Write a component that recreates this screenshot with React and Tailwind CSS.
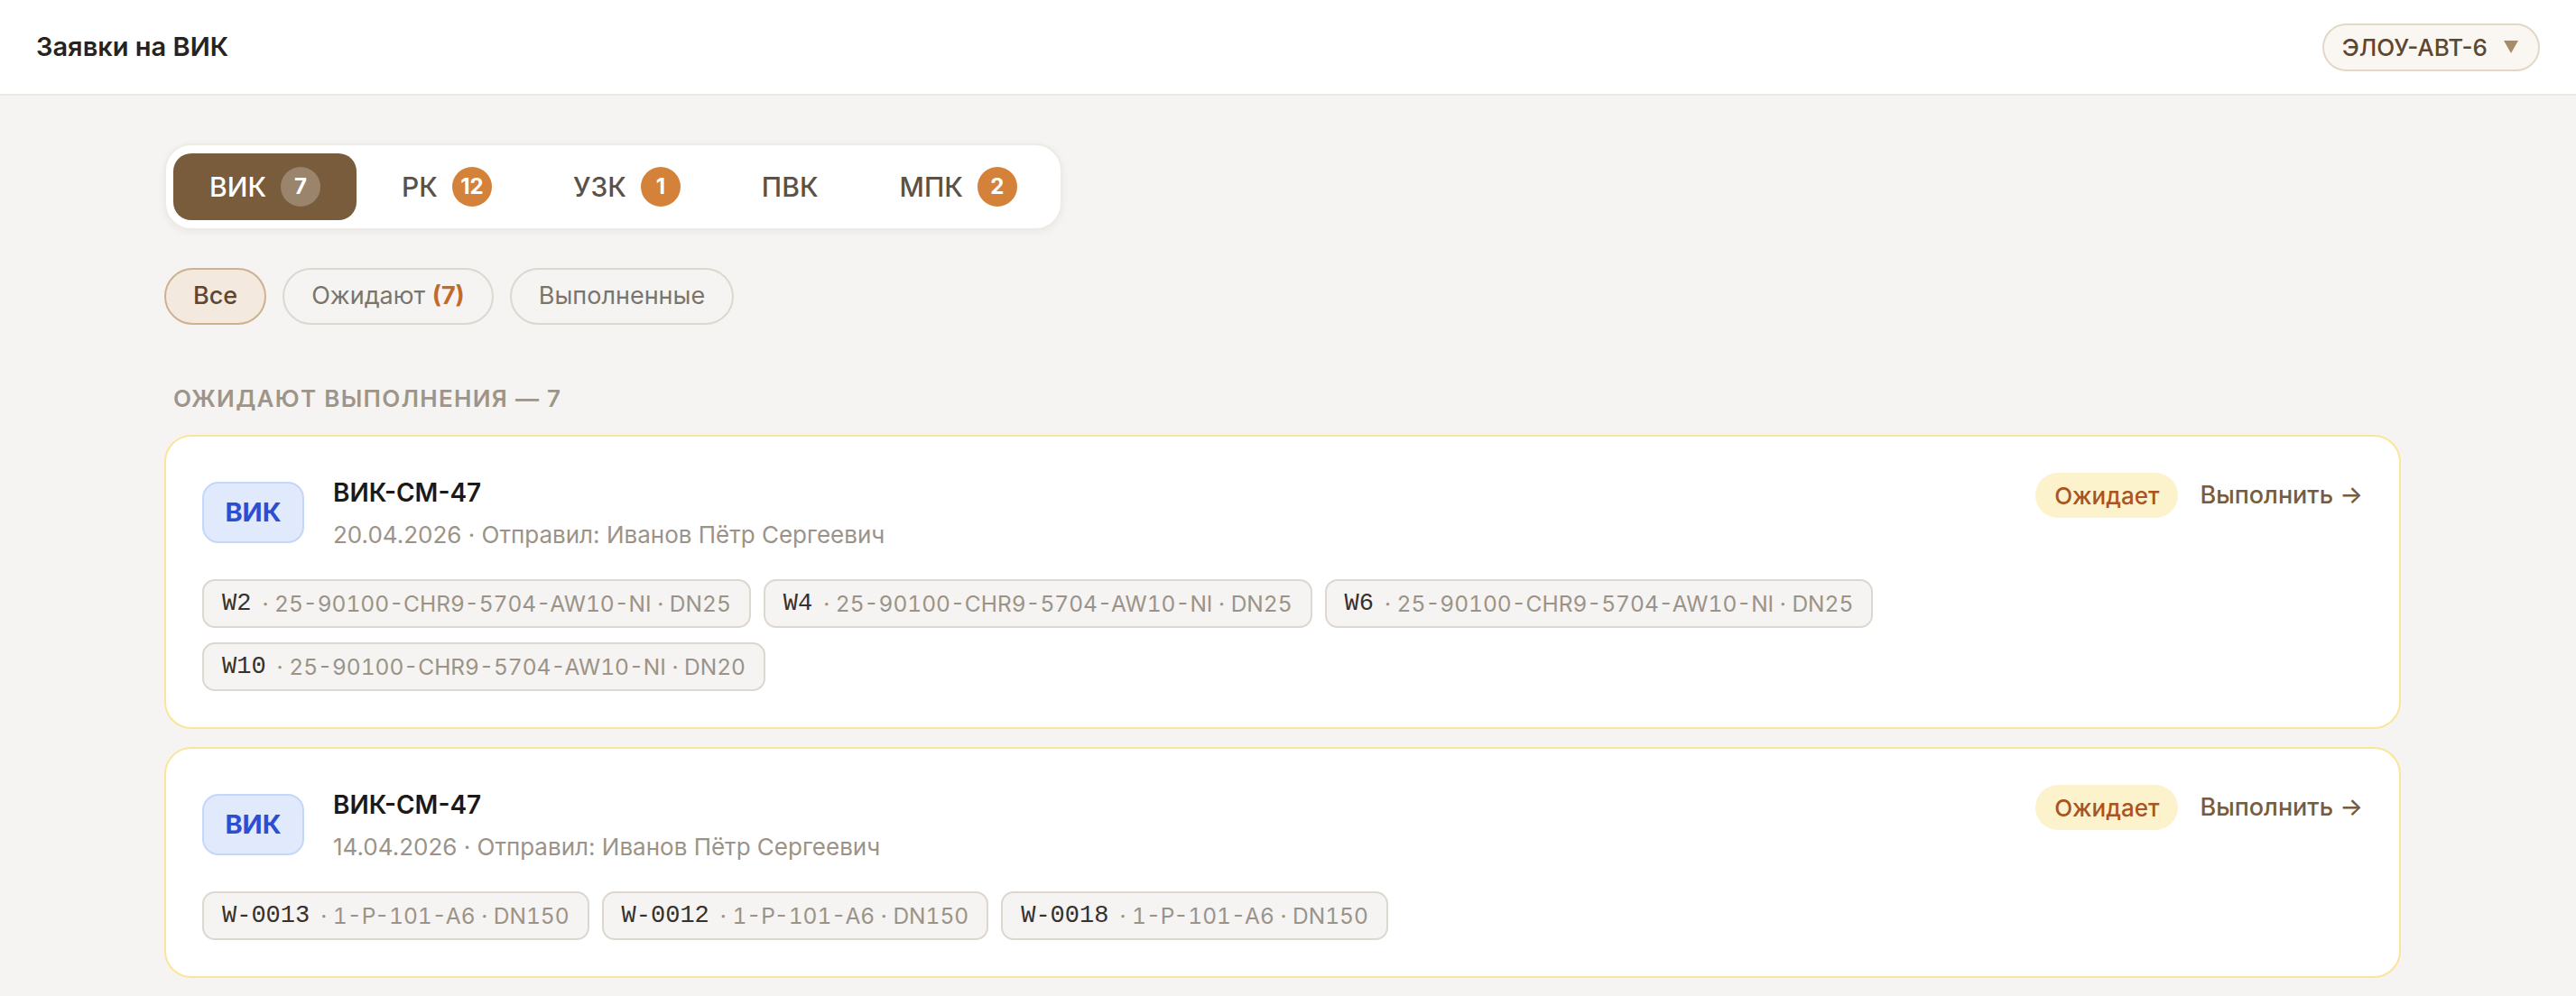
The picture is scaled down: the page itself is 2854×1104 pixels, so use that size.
import React from "react";

const tabs = [
  { name: "ВИК", count: 7, active: true },
  { name: "РК", count: 12 },
  { name: "УЗК", count: 1 },
  { name: "ПВК" },
  { name: "МПК", count: 2 },
];

const requests = [
  {
    id: 1,
    title: "ВИК-СМ-47",
    date: "20.04.2026",
    sender: "Иванов Пётр Сергеевич",
    welds: [
      { code: "W2", line: "25-90100-CHR9-5704-AW10-NI", dn: "DN25" },
      { code: "W4", line: "25-90100-CHR9-5704-AW10-NI", dn: "DN25" },
      { code: "W6", line: "25-90100-CHR9-5704-AW10-NI", dn: "DN25" },
      { code: "W10", line: "25-90100-CHR9-5704-AW10-NI", dn: "DN20" },
    ],
  },
  {
    id: 2,
    title: "ВИК-СМ-47",
    date: "14.04.2026",
    sender: "Иванов Пётр Сергеевич",
    welds: [
      { code: "W-0013", line: "1-P-101-A6", dn: "DN150" },
      { code: "W-0012", line: "1-P-101-A6", dn: "DN150" },
      { code: "W-0018", line: "1-P-101-A6", dn: "DN150" },
    ],
  },
];

const WeldChip = ({ weld }) => (
  <div className="flex h-[54px] items-center gap-3 rounded-[14px] border-2 border-[#dcd7cf] bg-[#f5f4f2] px-5 text-[24.5px] tabular-nums">
    <span className="font-['Liberation_Mono',monospace] text-[27px] text-[#35312c]">{weld.code}</span>
    <span className="text-[#9b9388]">
      · {weld.line} · {weld.dn}
    </span>
  </div>
);

const RequestCard = ({ req }) => (
  <div className="rounded-[30px] border-2 border-[#fbe59a] bg-white p-10">
    <div className="flex items-start justify-between">
      <div className="flex items-center gap-8">
        <div className="flex h-[68px] w-[113px] items-center justify-center rounded-[18px] border-2 border-[#c3d7fa] bg-[#e0eafc] text-[29px] font-bold text-[#2c4fd1]">
          ВИК
        </div>
        <div>
          <div className="text-[28px] font-semibold leading-[45px] text-[#1c1a17]">{req.title}</div>
          <div className="mt-1 text-[26px] leading-[39px] text-[#9b9388]">
            {req.date} · Отправил: {req.sender}
          </div>
        </div>
      </div>
      <div className="flex items-center gap-6">
        <span className="flex h-[50px] items-center rounded-full bg-[#fcf3cd] px-[21px] text-[26px] font-medium text-[#a8551f]">
          Ожидает
        </span>
        <button className="text-[27px] font-medium text-[#7a5b3b]">Выполнить →</button>
      </div>
    </div>
    <div className="mt-[30px] flex flex-wrap gap-x-[14px] gap-y-4">
      {req.welds.map((w) => (
        <WeldChip key={w.code} weld={w} />
      ))}
    </div>
  </div>
);

export default function App() {
  return (
    <div className="min-h-screen bg-[#f5f4f2] font-['Inter','Noto_Sans',sans-serif]">
      <header className="flex h-[106px] items-center justify-between border-b-2 border-[#ebe8e3] bg-white px-10">
        <h1 className="text-[29px] font-semibold text-[#262320]">Заявки на ВИК</h1>
        <button className="flex h-[53px] items-center gap-[18px] rounded-full border-2 border-[#e3d7c6] bg-[#faf7f2] pl-5 pr-[22px] text-[26px] font-medium text-[#5e4630]">
          ЭЛОУ-АВТ-6
          <svg width="16" height="14" viewBox="0 0 16 14">
            <path d="M0 0 H16 L8 14 Z" fill="#a88c69" />
          </svg>
        </button>
      </header>

      <main className="ml-[182px] w-[2478px] pt-[53px] pb-10">
        <div className="inline-flex h-[96px] items-center gap-2.5 rounded-[30px] border-2 border-[#eeebe7] bg-white p-[8px] shadow-[0_2px_8px_rgba(60,40,20,0.06)]">
          {tabs.map((t) => (
            <div
              key={t.name}
              className={
                t.active
                  ? "flex h-[74px] items-center gap-4 rounded-[20px] bg-[#785c3b] px-10 text-[30px] font-medium text-white"
                  : "flex h-[74px] items-center gap-4 rounded-[20px] px-10 text-[30px] font-medium text-[#5a5148]"
              }
            >
              {t.name}
              {t.count !== undefined && (
                <span
                  className={
                    t.active
                      ? "flex h-[44px] min-w-[44px] items-center justify-center rounded-full bg-white/25 px-[8px] text-[24px] font-bold text-white"
                      : "flex h-[44px] min-w-[44px] items-center justify-center rounded-full bg-[#d4813a] px-[8px] text-[24px] font-bold text-white"
                  }
                >
                  {t.count}
                </span>
              )}
            </div>
          ))}
        </div>

        <div className="mt-[42px] flex gap-[18px]">
          <button className="h-[63px] rounded-full border-2 border-[#cfb190] bg-[#f3e9df] px-[30px] text-[27px] font-medium text-[#5e4630]">
            Все
          </button>
          <button className="h-[63px] rounded-full border-2 border-[#ddd7cf] px-[30px] text-[27px] text-[#7b746b]">
            Ожидают <span className="font-bold text-[#c26a2b]">(7)</span>
          </button>
          <button className="h-[63px] rounded-full border-2 border-[#ddd7cf] px-[30px] text-[27px] text-[#7b746b]">
            Выполненные
          </button>
        </div>

        <h2 className="mt-[62px] pl-[10px] text-[26px] font-semibold uppercase leading-[40px] tracking-[0.05em] text-[#9e958a]">
          Ожидают выполнения — 7
        </h2>

        <div className="mt-5 flex flex-col gap-5">
          {requests.map((r) => (
            <RequestCard key={r.id} req={r} />
          ))}
        </div>
      </main>
    </div>
  );
}
